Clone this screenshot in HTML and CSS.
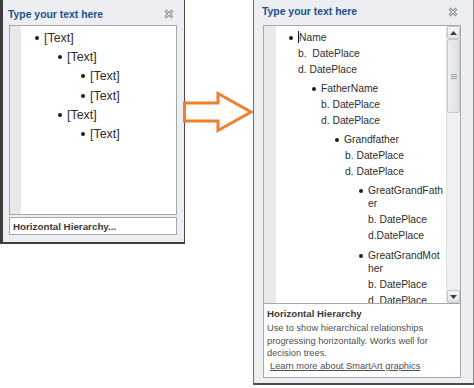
FILE: index.html
```
<!DOCTYPE html>
<html>
<head>
<meta charset="utf-8">
<link rel="stylesheet" href="styles.css">
<title>Type your text here</title>
</head>
<body>
<div class="page">

<div class="pane pane-small">
  <div class="pane-head">
    <span class="pane-title">Type your text here</span>
    <svg class="close" width="10" height="10" viewBox="0 0 10 10"><path d="M1.5 1.5L8.5 8.5M8.5 1.5L1.5 8.5" stroke="#8a8f96" stroke-width="3"/><path d="M1.5 1.5L8.5 8.5M8.5 1.5L1.5 8.5" stroke="#eef0f4" stroke-width="1"/></svg>
  </div>
  <div class="editor editor-small">
    <div class="gutter"></div>
    <div class="lines">
      <div class="row bullet s1"><span>[Text]</span></div>
      <div class="row bullet s2"><span>[Text]</span></div>
      <div class="row bullet s3"><span>[Text]</span></div>
      <div class="row bullet s3"><span>[Text]</span></div>
      <div class="row bullet s2"><span>[Text]</span></div>
      <div class="row bullet s3"><span>[Text]</span></div>
    </div>
  </div>
  <div class="foot foot-small">Horizontal Hierarchy...</div>
</div>

<div class="gap">
  <svg class="arrow" width="72" height="44" viewBox="0 0 72 44"><polygon points="1.5,12 35,12 35,2.5 68,21 35,39.5 35,30 1.5,30" fill="#fff" stroke="#f07f2c" stroke-width="3" stroke-linejoin="miter"/></svg>
</div>

<div class="pane pane-big">
  <div class="pane-head">
    <span class="pane-title">Type your text here</span>
    <svg class="close" width="10" height="10" viewBox="0 0 10 10"><path d="M1.5 1.5L8.5 8.5M8.5 1.5L1.5 8.5" stroke="#8a8f96" stroke-width="3"/><path d="M1.5 1.5L8.5 8.5M8.5 1.5L1.5 8.5" stroke="#eef0f4" stroke-width="1"/></svg>
  </div>
  <div class="editor editor-big">
    <div class="gutter"></div>
    <div class="lines">
      <div class="item bullet l1"><span><i class="caret"></i>Name</span></div>
      <div class="line l1">b.&nbsp; DatePlace</div>
      <div class="line l1">d. DatePlace</div>
      <div class="item bullet l2"><span>FatherName</span></div>
      <div class="line l2">b. DatePlace</div>
      <div class="line l2">d. DatePlace</div>
      <div class="item bullet l3"><span>Grandfather</span></div>
      <div class="line l3">b. DatePlace</div>
      <div class="line l3">d. DatePlace</div>
      <div class="item bullet l4"><span>GreatGrandFather</span></div>
      <div class="line l4">b. DatePlace</div>
      <div class="line l4">d.DatePlace</div>
      <div class="item bullet l4"><span>GreatGrandMother</span></div>
      <div class="line l4">b. DatePlace</div>
      <div class="line l4">d. DatePlace</div>
    </div>
    <div class="scrollbar">
      <div class="sb-btn"><svg width="7" height="4" viewBox="0 0 7 4"><polygon points="0,4 3.5,0 7,4" fill="#3c3c3c"/></svg></div>
      <div class="sb-thumb"><span class="grip"></span></div>
      <div class="sb-track"></div>
      <div class="sb-btn"><svg width="7" height="4" viewBox="0 0 7 4"><polygon points="0,0 3.5,4 7,0" fill="#3c3c3c"/></svg></div>
    </div>
  </div>
  <div class="foot foot-big">
    <div class="foot-title">Horizontal Hierarchy</div>
    <div class="foot-desc">Use to show hierarchical relationships progressing horizontally. Works well for decision trees.</div>
    <a class="foot-link" href="#">Learn more about SmartArt graphics</a>
  </div>
</div>

</div>
</body>
</html>
```

FILE: styles.css
```
body {
  margin: 0;
  background: #fff;
  font-family: "Liberation Sans", Arial, sans-serif;
}

.page {
  display: flex;
  align-items: flex-start;
}

.pane {
  box-sizing: border-box;
  background: #eceef2;
  display: flex;
  flex-direction: column;
}

.pane-small {
  width: 185px;
  height: 244px;
  border-left: 3px solid #3d3d3d;
  border-right: 1px solid #4a4a4a;
  border-bottom: 2px solid #3d3d3d;
  padding: 0 7px 0 6px;
}

.pane-big {
  width: 221px;
  height: 385px;
  border-left: 1px solid #6c6c6c;
  border-right: 1px solid #8a8a8a;
  border-bottom: 2px solid #4a4a4a;
  padding: 0 12px 0 9px;
}

.pane-head {
  height: 25px;
  display: flex;
  align-items: center;
  justify-content: space-between;
}

.pane-small .pane-head {
  padding: 3px 3px 0 0;
  box-sizing: border-box;
}

.pane-big .pane-head {
  padding: 0 3px 2px 0;
  box-sizing: border-box;
}

.pane-title {
  font-size: 10.4px;
  font-weight: bold;
  color: #21508f;
  margin-left: -1px;
}

.editor {
  box-sizing: border-box;
  background: #fff;
  border: 1px solid #a4a8ad;
  display: flex;
  overflow: hidden;
}

.editor-small {
  height: 190px;
}

.editor-big {
  height: 279px;
}

.gutter {
  background: #e9e9ea;
}

.editor-small .gutter {
  width: 11px;
}

.editor-big .gutter {
  width: 12px;
}

.lines {
  flex: 1;
  min-width: 0;
  color: #2e2e2e;
}

/* left list */
.editor-small .lines {
  padding-top: 2px;
  font-size: 12.4px;
}

.row {
  height: 19.3px;
  display: flex;
  align-items: center;
}

.bullet::before {
  content: "";
  flex: none;
  width: 4px;
  height: 4px;
  border-radius: 50%;
  background: #1e1e1e;
  margin-right: 5px;
}

.s1 { padding-left: 14px; }
.s2 { padding-left: 37px; }
.s3 { padding-left: 60px; }

/* right list */
.editor-big .lines {
  padding: 1.5px 3px 0 0;
  font-size: 10.3px;
  line-height: 13px;
}

.item {
  display: flex;
  align-items: flex-start;
  margin-top: 6.3px;
}

.item:first-child {
  margin-top: 3px;
}

.item.bullet::before {
  margin-top: 5px;
}

.item span {
  min-width: 0;
  overflow-wrap: anywhere;
}

.line {
  margin-top: 3px;
}

.l1.item { padding-left: 13px; }
.l2.item { padding-left: 36px; }
.l3.item { padding-left: 59px; }
.l4.item { padding-left: 83px; }
.l1.line { padding-left: 22px; }
.l2.line { padding-left: 45px; }
.l3.line { padding-left: 69px; }
.l4.line { padding-left: 92px; }

.caret {
  display: inline-block;
  width: 1px;
  height: 12px;
  background: #1b1b1b;
  vertical-align: -2px;
}

.scrollbar {
  width: 13px;
  display: flex;
  flex-direction: column;
  background: #eef0f2;
  border-left: 1px solid #dfe1e4;
}

.sb-btn {
  height: 13px;
  flex: none;
  display: flex;
  align-items: center;
  justify-content: center;
  background: linear-gradient(#f7f8f9, #dfe2e6);
  border: 1px solid #c3c7cc;
  border-radius: 2px;
  box-sizing: border-box;
}

.sb-thumb {
  height: 74px;
  flex: none;
  box-sizing: border-box;
  border: 1px solid #c6cacf;
  border-radius: 2px;
  background: linear-gradient(90deg, #eceef1, #dde0e4);
  display: flex;
  align-items: center;
  justify-content: center;
}

.grip {
  width: 6px;
  height: 5px;
  background: repeating-linear-gradient(#9ca1a7 0 1px, transparent 1px 2px);
}

.sb-track {
  flex: 1;
}

/* footers */
.foot {
  box-sizing: border-box;
  background: #fff;
  border: 1px solid #a4a8ad;
  color: #3a3a3a;
}

.foot-small {
  height: 18px;
  margin-top: 2px;
  padding: 3px 0 0 3px;
  font-size: 9.8px;
  font-weight: bold;
}

.foot-big {
  height: 75px;
  margin-top: -1px;
  padding: 4px 0 0 3px;
  font-size: 9.3px;
  line-height: 12.4px;
}

.foot-title {
  font-weight: bold;
  font-size: 9.7px;
  margin-bottom: 2px;
}

.foot-desc {
  color: #505050;
  padding-right: 14px;
}

.foot-link {
  display: inline-block;
  margin-left: 3px;
  color: #505050;
  text-decoration: underline;
}

.gap {
  width: 68px;
  padding-top: 91px;
  display: flex;
}

.arrow {
  margin-left: -2px;
  overflow: visible;
}
```
